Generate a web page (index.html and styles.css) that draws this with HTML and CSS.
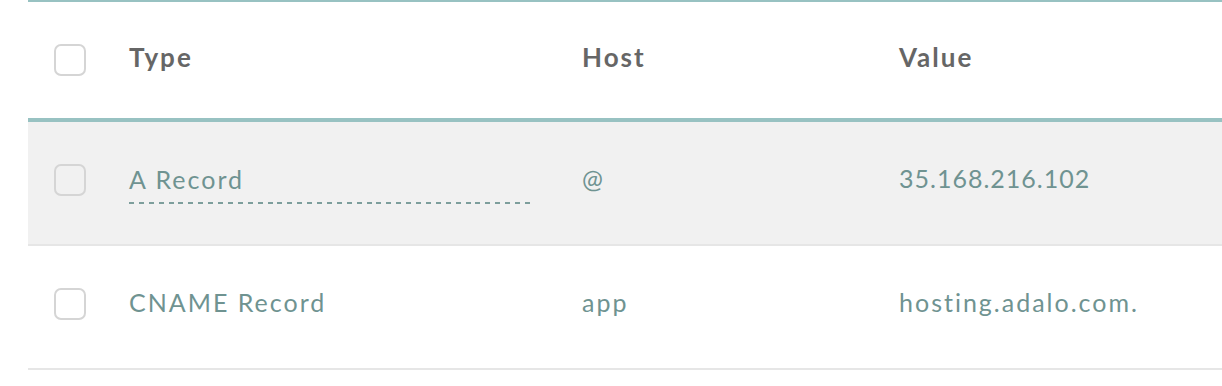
FILE: index.html
```html
<!DOCTYPE html>
<html>
<head>
<meta charset="utf-8">
<link rel="stylesheet" href="styles.css">
</head>
<body>
<div class="wrap">
  <div class="table">
    <div class="row head">
      <div class="cell cb"><span class="box"></span></div>
      <div class="cell">Type</div>
      <div class="cell">Host</div>
      <div class="cell">Value</div>
    </div>
    <div class="row body hl">
      <div class="cell cb"><span class="box"></span></div>
      <div class="cell"><span class="tip">A Record</span></div>
      <div class="cell">@</div>
      <div class="cell num">35.168.216.102</div>
    </div>
    <div class="row body">
      <div class="cell cb"><span class="box"></span></div>
      <div class="cell">CNAME Record</div>
      <div class="cell">app</div>
      <div class="cell">hosting.adalo.com.</div>
    </div>
  </div>
</div>
</body>
</html>
```
FILE: styles.css
```css
html, body {
  margin: 0;
  padding: 0;
  background: #ffffff;
}
.wrap {
  padding-left: 28px;
}
.table {
  border-top: 2px solid #98c2c2;
  font-family: Lato, "Open Sans", sans-serif;
}
.row {
  display: grid;
  grid-template-columns: 101px 453px 317px 1fr;
  align-items: center;
}
.cell {
  line-height: 30px;
}
.head {
  height: 116px;
  border-bottom: 4px solid #98c2c2;
  color: #666666;
  font-weight: 700;
  font-size: 26px;
  letter-spacing: 2px;
}
.head .cell {
  padding-bottom: 7px;
}
.head .cb {
  padding-bottom: 0;
}
.body {
  height: 116px;
  padding-bottom: 6px;
  border-bottom: 2px solid #e6e6e6;
  color: #6f9391;
  font-size: 25px;
  letter-spacing: 2px;
}
.body .cell {
  padding-bottom: 4px;
}
.body .cb {
  padding-bottom: 0;
}
.body .num {
  letter-spacing: 1px;
}
.hl {
  background: #f1f1f1;
}
.cb {
  display: flex;
}
.box {
  width: 28px;
  height: 28px;
  margin-left: 26px;
  border: 2px solid #d5d5d5;
  border-radius: 7px;
}
.head .box {
  background: #ffffff;
}
.tip {
  display: block;
  width: 401px;
  padding-top: 11px;
  padding-bottom: 10px;
  background-image: repeating-linear-gradient(to right, #7d9e9c 0 5px, transparent 5px 9.9px);
  background-size: 100% 2px;
  background-repeat: no-repeat;
  background-position: left bottom;
}
```
